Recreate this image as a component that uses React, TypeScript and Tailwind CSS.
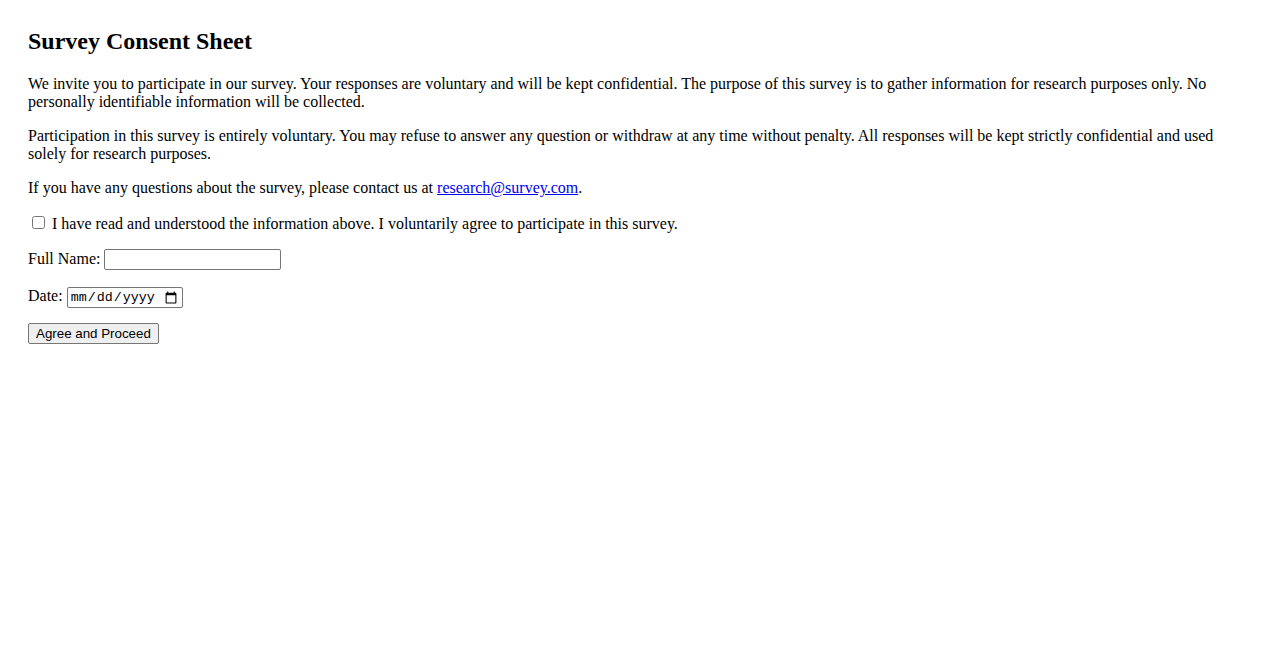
export default function App() {
  return (
    <div className="min-h-screen bg-white p-7 font-['Liberation_Serif',serif] text-base leading-[normal] text-black">
      <h2 className="mb-5 text-2xl font-bold leading-[normal]">Survey Consent Sheet</h2>
      <p className="mb-4">
        We invite you to participate in our survey. Your responses are voluntary and will be kept
        confidential. The purpose of this survey is to gather information for research purposes only. No
        personally identifiable information will be collected.
      </p>
      <p className="mb-4">
        Participation in this survey is entirely voluntary. You may refuse to answer any question or
        withdraw at any time without penalty. All responses will be kept strictly confidential and used
        solely for research purposes.
      </p>
      <p className="mb-4">
        If you have any questions about the survey, please contact us at{" "}
        <a href="mailto:research@survey.com" className="text-[#0000ee] underline">
          research@survey.com
        </a>
        .
      </p>
      <form onSubmit={(e) => e.preventDefault()}>
        <div className="mb-4">
          <input type="checkbox" id="consent" className="my-[3px] ml-1 mr-[3px]" />{" "}
          <label htmlFor="consent">
            I have read and understood the information above. I voluntarily agree to participate in this
            survey.
          </label>
        </div>
        <div className="mb-4">
          <label htmlFor="name">Full Name:</label>{" "}
          <input
            type="text"
            id="name"
            className="h-[21px] w-[177px] rounded-[2px] border border-[#767676] bg-white px-0.5 py-px font-['Liberation_Sans',sans-serif] text-[13.33px]"
          />
        </div>
        <div className="mb-[15px] pt-px">
          <label htmlFor="date">Date:</label>{" "}
          <input
            type="date"
            id="date"
            className="h-[21px] w-[116px] rounded-[2px] border border-[#767676] bg-white px-0.5 py-px font-['Liberation_Mono',monospace] text-[13.33px]"
          />
        </div>
        <button
          type="submit"
          className="h-[21px] rounded-[2px] border border-[#767676] bg-[#efefef] px-[7px] py-px font-['Liberation_Sans',sans-serif] text-[13.33px] leading-[normal]"
        >
          Agree and Proceed
        </button>
      </form>
    </div>
  );
}
